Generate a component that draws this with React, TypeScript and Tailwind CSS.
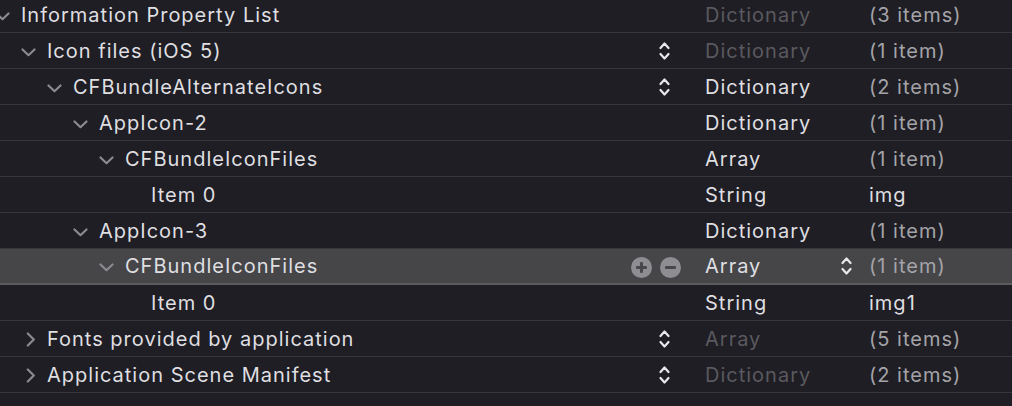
import React from "react";

type Row = {
  level: number;
  key: string;
  chevron: "down" | "right" | "none";
  keyStepper?: boolean;
  type: string;
  typeDim?: boolean;
  value: string;
  valueBright?: boolean;
  selected?: boolean;
};

const rows: Row[] = [
  { level: 0, key: "Information Property List", chevron: "down", type: "Dictionary", typeDim: true, value: "(3 items)" },
  { level: 1, key: "Icon files (iOS 5)", chevron: "down", keyStepper: true, type: "Dictionary", typeDim: true, value: "(1 item)" },
  { level: 2, key: "CFBundleAlternateIcons", chevron: "down", keyStepper: true, type: "Dictionary", value: "(2 items)" },
  { level: 3, key: "AppIcon-2", chevron: "down", type: "Dictionary", value: "(1 item)" },
  { level: 4, key: "CFBundleIconFiles", chevron: "down", type: "Array", value: "(1 item)" },
  { level: 5, key: "Item 0", chevron: "none", type: "String", value: "img", valueBright: true },
  { level: 3, key: "AppIcon-3", chevron: "down", type: "Dictionary", value: "(1 item)" },
  { level: 4, key: "CFBundleIconFiles", chevron: "down", type: "Array", value: "(1 item)", selected: true },
  { level: 5, key: "Item 0", chevron: "none", type: "String", value: "img1", valueBright: true },
  { level: 1, key: "Fonts provided by application", chevron: "right", keyStepper: true, type: "Array", typeDim: true, value: "(5 items)" },
  { level: 1, key: "Application Scene Manifest", chevron: "right", keyStepper: true, type: "Dictionary", typeDim: true, value: "(2 items)" },
];

const indent = ["-ml-[5px]", "pl-[21px]", "pl-[47px]", "pl-[73px]", "pl-[99px]", "pl-[125px]"];

function ChevronDown() {
  return (
    <svg width="15" height="9" viewBox="0 0 15 9" className="mt-[3px]">
      <polyline points="1.5,1.5 7.5,7.2 13.5,1.5" fill="none" stroke="#8b8a90" strokeWidth="2.2" strokeLinecap="round" strokeLinejoin="round" />
    </svg>
  );
}

function ChevronRight() {
  return (
    <svg width="10" height="15" viewBox="0 0 10 15" className="ml-[5px] mt-[1px]">
      <polyline points="1.8,1.5 7.8,7.5 1.8,13.5" fill="none" stroke="#8b8a90" strokeWidth="2.2" strokeLinecap="round" strokeLinejoin="round" />
    </svg>
  );
}

function Stepper() {
  return (
    <svg width="11" height="22" viewBox="0 0 11 22" className="shrink-0">
      <polyline points="1.5,8 5.5,3.5 9.5,8" fill="none" stroke="#e8e8ea" strokeWidth="2.2" strokeLinecap="round" strokeLinejoin="round" />
      <polyline points="1.5,14 5.5,18.5 9.5,14" fill="none" stroke="#e8e8ea" strokeWidth="2.2" strokeLinecap="round" strokeLinejoin="round" />
    </svg>
  );
}

function PlusMinus() {
  return (
    <div className="flex items-center gap-[8px] mt-[3px]">
      <svg width="21" height="21" viewBox="0 0 21 21">
        <circle cx="10.5" cy="10.5" r="10.5" fill="#8e8e92" />
        <rect x="5" y="9" width="11" height="3" rx="1" fill="#48484a" />
        <rect x="9" y="5" width="3" height="11" rx="1" fill="#48484a" />
      </svg>
      <svg width="21" height="21" viewBox="0 0 21 21">
        <circle cx="10.5" cy="10.5" r="10.5" fill="#8e8e92" />
        <rect x="5" y="9" width="11" height="3" rx="1" fill="#48484a" />
      </svg>
    </div>
  );
}

export default function App() {
  return (
    <div
      className="w-[1012px] h-[406px] overflow-hidden bg-[#1f1e24] text-[20px] tracking-[1px] text-[#dfdfe1]"
      style={{ fontFamily: "Inter, 'Noto Sans', sans-serif" }}
    >
      <div className="-mt-[3px]">
        {rows.map((r, i) => (
          <div
            key={i}
            className={
              r.selected
                ? "grid grid-cols-[705px_164px_1fr] h-[36px] items-center bg-[#464649] border-b-2 border-[#5b5b5e]"
                : "grid grid-cols-[705px_164px_1fr] h-[36px] items-center border-b border-[#38373d]"
            }
          >
            <div className={"flex items-center h-full " + indent[r.level]}>
              <div className="w-[26px] shrink-0 flex items-center">
                {r.chevron === "down" && <ChevronDown />}
                {r.chevron === "right" && <ChevronRight />}
              </div>
              <span className="flex-1 whitespace-nowrap leading-none">{r.key}</span>
              {r.keyStepper && (
                <div className="pr-[35px] flex items-center">
                  <Stepper />
                </div>
              )}
              {r.selected && (
                <div className="pr-[24px] flex items-center">
                  <PlusMinus />
                </div>
              )}
            </div>
            <div className="flex items-center h-full">
              <span className={"flex-1 whitespace-nowrap leading-none " + (r.typeDim ? "text-[#5a595f]" : "text-[#dfdfe1]")}>
                {r.type}
              </span>
              {r.selected && (
                <div className="pr-[17px] flex items-center">
                  <Stepper />
                </div>
              )}
            </div>
            <div className="flex items-center h-full">
              <span className={"whitespace-nowrap leading-none " + (r.valueBright ? "text-[#dfdfe1]" : "text-[#a4a3a8]")}>
                {r.value}
              </span>
            </div>
          </div>
        ))}
      </div>
    </div>
  );
}
